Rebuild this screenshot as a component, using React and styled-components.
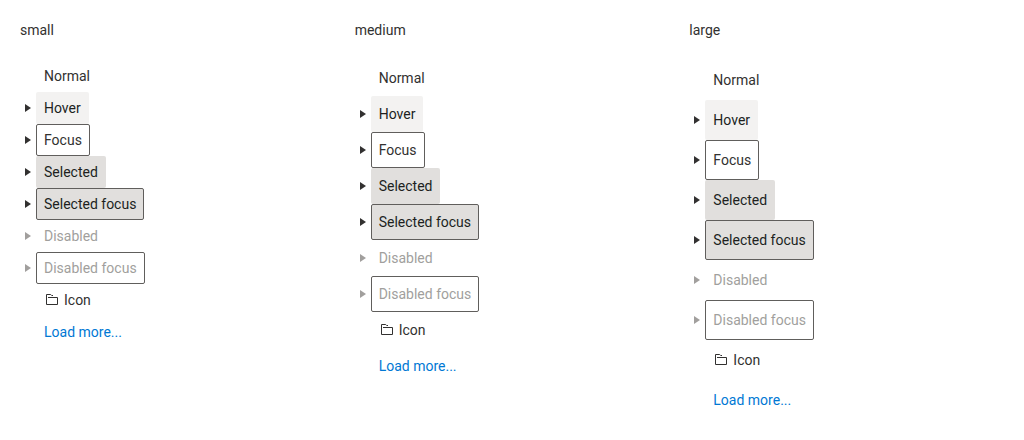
import React from 'react';
import styled, { createGlobalStyle, css } from 'styled-components';

const GlobalStyle = createGlobalStyle`
  *, *::before, *::after { box-sizing: border-box; }
  body {
    margin: 0;
    background: #fff;
    color: #323130;
    font-family: Roboto, "Liberation Sans", sans-serif;
    font-size: 14px;
    line-height: 20px;
  }
`;

const Page = styled.main`
  display: grid;
  grid-template-columns: repeat(3, 1fr);
  column-gap: 20px;
  padding: 20px;
`;

const Column = styled.section`
  min-width: 0;
`;

const Heading = styled.h2`
  margin: 0 0 20px;
  font-size: 14px;
  font-weight: 400;
  line-height: 20px;
`;

const Tree = styled.ul`
  margin: 0;
  padding: 0;
  list-style: none;
`;

const Row = styled.li`
  display: flex;
  align-items: center;
  height: ${(p) => p.$height}px;
`;

const Toggle = styled.button`
  display: flex;
  align-items: center;
  justify-content: center;
  width: 16px;
  height: 16px;
  padding: 0;
  border: 0;
  background: none;
  color: #323130;
  &:disabled { color: #a19f9d; }
`;

const Spacer = styled.span`
  width: 16px;
`;

const states = {
  normal: css``,
  hover: css`background: #f3f2f1; color: #201f1e;`,
  focus: css`border-color: #605e5c;`,
  selected: css`background: #e1dfdd; color: #201f1e;`,
  selectedFocus: css`background: #e1dfdd; border-color: #605e5c; color: #201f1e;`,
  disabled: css`color: #a19f9d;`,
  disabledFocus: css`color: #a19f9d; border-color: #605e5c;`,
};

const Leaf = styled.button`
  display: flex;
  align-items: center;
  gap: 4px;
  height: 100%;
  padding: 0 7px;
  border: 1px solid transparent;
  border-radius: 2px;
  background: none;
  color: #323130;
  font: inherit;
  white-space: nowrap;
  ${(p) => states[p.$state]}
`;

const MoreLink = styled.a`
  padding: 0 8px;
  color: #0078d4;
  text-decoration: none;
`;

const Arrow = () => (
  <svg width="16" height="16" viewBox="0 0 16 16" fill="currentColor" aria-hidden="true">
    <path d="M5 4v8l6-4z" />
  </svg>
);

const Folder = () => (
  <svg width="16" height="16" viewBox="0 0 16 16" fill="none" stroke="currentColor" aria-hidden="true">
    <path d="M2.5 12.5v-10h4.2l1 1h1.3M2.5 12.5h11v-7h-9.500" />
  </svg>
);

const items = [
  { label: 'Normal', state: 'normal', leaf: true },
  { label: 'Hover', state: 'hover' },
  { label: 'Focus', state: 'focus' },
  { label: 'Selected', state: 'selected' },
  { label: 'Selected focus', state: 'selectedFocus' },
  { label: 'Disabled', state: 'disabled', disabled: true },
  { label: 'Disabled focus', state: 'disabledFocus', disabled: true },
  { label: 'Icon', state: 'normal', leaf: true, icon: true },
];

const sizes = [
  { name: 'small', height: 32 },
  { name: 'medium', height: 36 },
  { name: 'large', height: 40 },
];

const TreeView = ({ height }) => (
  <Tree>
    {items.map(({ label, state, leaf, icon, disabled }) => (
      <Row key={label} $height={height}>
        {leaf ? <Spacer /> : (
          <Toggle type="button" aria-label={'Expand ' + label} disabled={disabled}><Arrow /></Toggle>
        )}
        <Leaf type="button" $state={state} disabled={disabled}>
          {icon && <Folder />}
          {label}
        </Leaf>
      </Row>
    ))}
    <Row $height={height}>
      <Spacer />
      <MoreLink href="#more">Load more...</MoreLink>
    </Row>
  </Tree>
);

export default function App() {
  return (
    <>
      <GlobalStyle />
      <Page>
        {sizes.map(({ name, height }) => (
          <Column key={name}>
            <Heading>{name}</Heading>
            <TreeView height={height} />
          </Column>
        ))}
      </Page>
    </>
  );
}
